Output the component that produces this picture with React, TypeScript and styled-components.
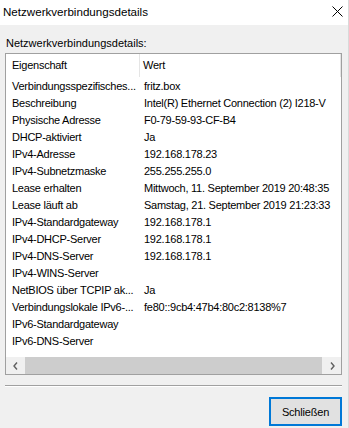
import React from "react";
import styled, { createGlobalStyle } from "styled-components";

const Global = createGlobalStyle`
  html, body { margin: 0; padding: 0; background: #f0f0f0; }
  body { font-family: "Liberation Sans", Arial, sans-serif; }
`;

const Window = styled.div`
  width: 349px;
  height: 428px;
  background: #f0f0f0;
  display: flex;
  flex-direction: column;
  box-sizing: border-box;
  border-right: 1px solid #d9d9d9;
  overflow: hidden;
`;

const TitleBar = styled.div`
  height: 25px;
  background: #ffffff;
  display: flex;
  align-items: center;
  justify-content: space-between;
  padding: 0 5px 2px 3px;
  box-sizing: border-box;
  flex-shrink: 0;
`;

const Title = styled.span`
  font-size: 11.6px;
  color: #000;
`;

const CloseIcon = styled.svg`
  align-self: flex-start;
  margin-top: 6px;
`;

const Content = styled.div`
  display: flex;
  flex-direction: column;
  padding: 11px 6px 0 5px;
`;

const Label = styled.div`
  font-size: 11px;
  line-height: 14px;
  color: #000;
  margin-bottom: 3px;
  padding-left: 1px;
`;

const ListBox = styled.div`
  border: 1px solid #a0a0a0;
  background: #ffffff;
  height: 320px;
  display: flex;
  flex-direction: column;
`;

const Rows = styled.div`
  flex: 1;
  display: grid;
  grid-template-columns: 134px 201px;
  grid-template-rows: 23px;
  grid-auto-rows: 17px;
  align-content: start;
`;

const HeaderCell = styled.div<{ $last?: boolean }>`
  display: flex;
  align-items: center;
  padding-left: ${(p) => (p.$last ? "3px" : "6px")};
  padding-bottom: 2px;
  font-size: 11px;
  letter-spacing: -0.25px;
  color: #000;
  border-right: 1px solid #e5e5e5;
`;

const Cell = styled.div<{ $value?: boolean }>`
  display: flex;
  align-items: center;
  padding-left: ${(p) => (p.$value ? "4px" : "6px")};
  font-size: 11px;
  letter-spacing: -0.25px;
  color: #000;
  white-space: nowrap;
  overflow: hidden;
`;

const ScrollBar = styled.div`
  height: 17px;
  display: flex;
  background: #f0f0f0;
`;

const ArrowButton = styled.div`
  width: 18px;
  display: flex;
  align-items: center;
  justify-content: center;
`;

const Thumb = styled.div`
  flex: 1;
  background: #cdcdcd;
  margin: 0 1px;
`;

const Separator = styled.div`
  margin-top: 10px;
  height: 1px;
  background: #a0a0a0;
  border-bottom: 1px solid #ffffff;
`;

const Footer = styled.div`
  display: flex;
  justify-content: flex-end;
  padding-top: 10px;
`;

const Button = styled.button`
  width: 73px;
  height: 29px;
  box-sizing: border-box;
  border: 2px solid #0078d7;
  background: #e1e1e1;
  font-family: "Liberation Sans", Arial, sans-serif;
  font-size: 11px;
  letter-spacing: -0.2px;
  color: #000;
  padding: 0;
`;

const rows: [string, string][] = [
  ["Verbindungsspezifisches...", "fritz.box"],
  ["Beschreibung", "Intel(R) Ethernet Connection (2) I218-V"],
  ["Physische Adresse", "F0-79-59-93-CF-B4"],
  ["DHCP-aktiviert", "Ja"],
  ["IPv4-Adresse", "192.168.178.23"],
  ["IPv4-Subnetzmaske", "255.255.255.0"],
  ["Lease erhalten", "Mittwoch, 11. September 2019 20:48:35"],
  ["Lease läuft ab", "Samstag, 21. September 2019 21:23:33"],
  ["IPv4-Standardgateway", "192.168.178.1"],
  ["IPv4-DHCP-Server", "192.168.178.1"],
  ["IPv4-DNS-Server", "192.168.178.1"],
  ["IPv4-WINS-Server", ""],
  ["NetBIOS über TCPIP ak...", "Ja"],
  ["Verbindungslokale IPv6-...", "fe80::9cb4:47b4:80c2:8138%7"],
  ["IPv6-Standardgateway", ""],
  ["IPv6-DNS-Server", ""],
];

export default function App() {
  return (
    <>
      <Global />
      <Window>
        <TitleBar>
          <Title>Netzwerkverbindungsdetails</Title>
          <CloseIcon width="11" height="11" viewBox="0 0 11 11">
            <path d="M0.5 0.5 L10.5 10.5 M10.5 0.5 L0.5 10.5" stroke="#000" strokeWidth="1" />
          </CloseIcon>
        </TitleBar>
        <Content>
          <Label>Netzwerkverbindungsdetails:</Label>
          <ListBox>
            <Rows>
              <HeaderCell>Eigenschaft</HeaderCell>
              <HeaderCell $last>Wert</HeaderCell>
              {rows.map(([k, v], i) => (
                <React.Fragment key={i}>
                  <Cell>{k}</Cell>
                  <Cell $value>{v}</Cell>
                </React.Fragment>
              ))}
            </Rows>
            <ScrollBar>
              <ArrowButton>
                <svg width="5" height="8" viewBox="0 0 5 8">
                  <path d="M4 0.5 L1 4 L4 7.5" stroke="#606060" strokeWidth="1.4" fill="none" />
                </svg>
              </ArrowButton>
              <Thumb />
              <ArrowButton>
                <svg width="5" height="8" viewBox="0 0 5 8">
                  <path d="M1 0.5 L4 4 L1 7.5" stroke="#606060" strokeWidth="1.4" fill="none" />
                </svg>
              </ArrowButton>
            </ScrollBar>
          </ListBox>
          <Separator />
          <Footer>
            <Button>Schließen</Button>
          </Footer>
        </Content>
      </Window>
    </>
  );
}
